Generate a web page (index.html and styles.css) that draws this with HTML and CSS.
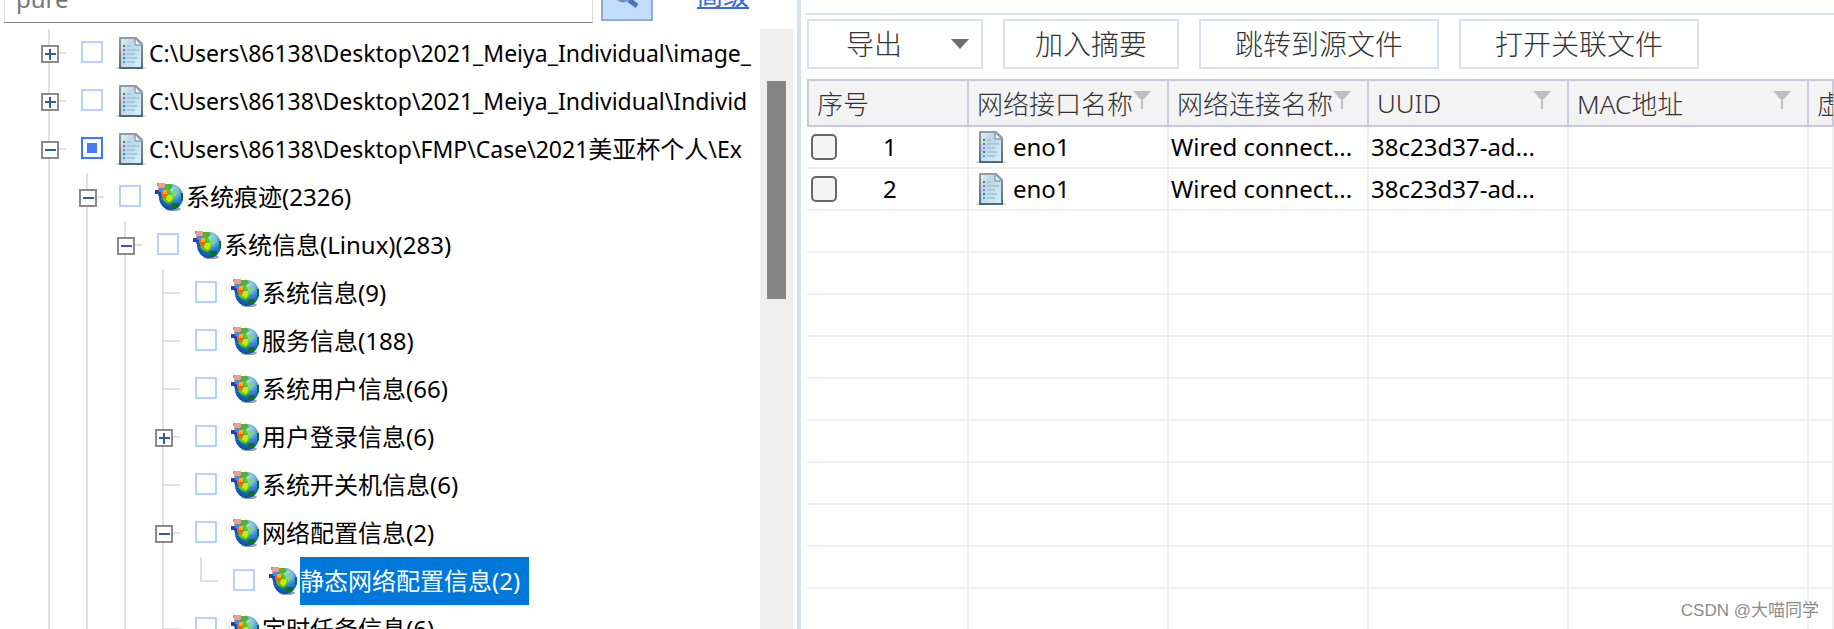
FILE: index.html
```html
<!DOCTYPE html>
<html lang="zh-CN">
<head>
<meta charset="utf-8">
<title>静态网络配置信息</title>
<link rel="stylesheet" href="styles.css">
</head>
<body>
<svg class="defs" aria-hidden="true">
  <defs>
    <linearGradient id="paper" x1="0" y1="0" x2="1" y2="1"><stop offset="0" stop-color="#e2f1f8"/><stop offset=".35" stop-color="#b9d6ea"/><stop offset="1" stop-color="#d8f0f8"/></linearGradient>
    <linearGradient id="edge" x1="0" y1="0" x2="0" y2="1"><stop offset="0" stop-color="#9a9a9a"/><stop offset="1" stop-color="#566c80"/></linearGradient>
    <radialGradient id="sea" cx=".6" cy=".25" r=".8"><stop offset="0" stop-color="#bdeaf5"/><stop offset=".5" stop-color="#2f86de"/><stop offset="1" stop-color="#0a3f9e"/></radialGradient>
  </defs>
  <symbol id="doc" viewBox="0 0 30 32">
    <path d="M0 30h30v2H0z" fill="#dcdcdc"/>
    <path d="M4 1h16l6 6v24H4z" fill="url(#paper)" stroke="url(#edge)" stroke-width="2"/>
    <path d="M19 1v7h7z" fill="#f2f8fb" stroke="#8aa2b5" stroke-width="1.5"/>
    <path d="M3 30h24v2H3z" fill="#50687d"/>
    <path d="M11 8h4v2h-4zM11 12h12v2H11zM11 16h8v2h-8zM11 20h10v2H11zM11 24h8v2h-8z" fill="#a5cbd4"/>
    <path d="M7 8h2v2H7z" fill="#25a825"/><path d="M7 12h2v2H7z" fill="#c0606a"/><path d="M7 16h2v2H7zM7 24h2v2H7z" fill="#5a92ff"/><path d="M7 20h2v2H7z" fill="#6c6c6c"/>
  </symbol>
  <symbol id="globe" viewBox="0 0 28 28">
    <ellipse cx="18" cy="26" rx="8" ry="2" fill="#9a9ea5"/>
    <ellipse cx="16" cy="14" rx="12" ry="13" fill="url(#sea)"/>
    <path d="M10 1h6l2 3-4 3-4-2z" fill="#4db82a"/>
    <path d="M18 6h4v4l-2 4-2 2-2-4z" fill="#7fd48a"/>
    <path d="M4 12l3-2 6-4 3 2 1 4 2 2-1 4-4 3-4-2-4-4z" fill="#55c42a"/>
    <path d="M12 12h5l1 3-3 4-4-2z" fill="#c2ee00"/>
    <path d="M26 10h2v7l-2 2zM18 20h6v3l-4 2h-3v-3z" fill="#08751c"/>
    <path d="M2 0h2v3H2z" fill="#9c9c9c"/><path d="M4 0h6v4L7 7H3V3z" fill="#f69a85"/>
    <path d="M6 9h7v3l-3 3-4-3z" fill="#ff5a12"/><path d="M8 7h4v4H8z" fill="#ffb400"/>
    <path d="M0 7h5l1 5 2 4-4-2-1-3H0z" fill="#1748ad"/>
    <path d="M4 5h4v4H4z" fill="#3a92d8"/>
  </symbol>
  <symbol id="funnel" viewBox="0 0 18 18"><path d="M0 0h18l-7 8H7z" fill="#bfbfbf"/><path d="M8 7h2v11H8z" fill="#bfbfbf"/></symbol>
</svg>

<main class="app">
  <section class="side">
    <form class="search">
      <input class="search-box" type="text" value="pure" aria-label="搜索">
      <button class="search-go" type="button" aria-label="查找"><svg viewBox="0 0 28 28"><circle cx="10" cy="11" r="7" fill="none" stroke="#6d92c4" stroke-width="3"/><path d="M16 17l8 6" stroke="#4a76b0" stroke-width="5"/></svg></button>
      <a class="advanced" href="#">高级</a>
    </form>
    <div class="tree-wrap">
      <ul class="tree" id="tree"></ul>
      <div class="scroll"><div class="thumb"></div></div>
    </div>
  </section>

  <section class="main">
    <div class="toolbar">
      <button class="tool drop" type="button">导出<svg class="caret" viewBox="0 0 18 10"><path d="M0 0h18l-9 10z" fill="#6d6d6d"/></svg></button>
      <button class="tool" type="button">加入摘要</button>
      <button class="tool wide" type="button">跳转到源文件</button>
      <button class="tool wide" type="button">打开关联文件</button>
    </div>
    <table class="grid">
      <colgroup><col class="c-no"><col class="c-mid"><col class="c-mid"><col class="c-mid"><col class="c-mac"><col></colgroup>
      <thead><tr>
        <th scope="col"><div class="head">序号</div></th>
        <th scope="col"><div class="head">网络接口名称<svg class="funnel"><use href="#funnel"/></svg></div></th>
        <th scope="col"><div class="head">网络连接名称<svg class="funnel"><use href="#funnel"/></svg></div></th>
        <th scope="col"><div class="head">UUID<svg class="funnel"><use href="#funnel"/></svg></div></th>
        <th scope="col"><div class="head">MAC地址<svg class="funnel"><use href="#funnel"/></svg></div></th>
        <th scope="col"><div class="head">虚</div></th>
      </tr></thead>
      <tbody id="rows"></tbody>
    </table>
  </section>
  <div class="mark">CSDN @大喵同学</div>
</main>
<script src="app.js"></script>
</body>
</html>
```
FILE: styles.css
```css
* { box-sizing: border-box; }
body {
  margin: 0;
  background: #fff;
  color: #000;
  font-family: "Noto Sans", "Noto Sans CJK SC", sans-serif;
  font-size: 24px;
}
.defs { position: absolute; width: 0; height: 0; }
.app { position: relative; display: flex; height: 100vh; overflow: hidden; }

.side {
  display: flex;
  flex-direction: column;
  flex: 0 0 801px;
  border-right: 4px solid #d8e1f1;
}
.search {
  display: flex;
  align-items: flex-end;
  height: 29px;
  padding: 0 0 6px 4px;
}
.search-box {
  width: 589px;
  height: 50px;
  padding: 0 11px;
  border: 1px solid #dcdcdc;
  border-bottom-color: #858585;
  background: #fff;
  color: #767676;
  font: inherit;
}
.search-go {
  display: flex;
  justify-content: center;
  align-items: flex-end;
  width: 52px;
  height: 48px;
  margin: 0 44px 2px 8px;
  padding: 0 0 8px;
  border: 2px solid #8fadd2;
  background: #c4dcfd;
}
.search-go svg { width: 28px; height: 28px; }
.advanced {
  margin-bottom: 12px;
  color: #3c6bd9;
  font-size: 26px;
  line-height: 32px;
}

.tree-wrap { display: flex; flex: 1; min-height: 0; padding-right: 4px; }
.tree { flex: 1; min-width: 0; margin: 0; padding: 0 0 0 32px; overflow: hidden; list-style: none; }
.node { display: flex; height: 48px; white-space: nowrap; }
.guide { flex: 0 0 38px; background: linear-gradient(#e0e0e0, #e0e0e0) 16px 0 / 2px 100% no-repeat; }
.joint {
  display: flex;
  align-items: center;
  flex: 0 0 38px;
  padding: 2px 0 0 9px;
  background:
    linear-gradient(#e0e0e0, #e0e0e0) 16px 0 / 2px 100% no-repeat,
    linear-gradient(#e0e0e0, #e0e0e0) 16px 23px / 18px 2px no-repeat;
}
.joint.last { background-size: 2px 25px, 18px 2px; }
.toggle { display: block; width: 18px; height: 18px; padding: 0; border: 2px solid #8a8a8a; background: #fff; }
.toggle svg { display: block; width: 14px; height: 14px; }
.tick {
  flex: none;
  appearance: none;
  width: 22px;
  height: 22px;
  margin: 12px 13px 0 11px;
  border: 2px solid #b9d0ff;
  background: #fff;
}
.tick.partial { border-color: #3a78ff; background: linear-gradient(#427bff, #427bff) center / 10px 10px no-repeat; }
.doc { flex: none; width: 30px; height: 32px; }
.node .doc { margin: 8px 3px 0 0; }
.globe { flex: none; width: 28px; height: 28px; margin: 10px 3px 0 1px; }
.name { line-height: 48px; cursor: pointer; }
.path { font-size: 23px; }
.han { font-size: 24px; }
.chosen { padding-right: 9px; background: #0078d9; color: #fff; }
.scroll { flex: 0 0 33px; padding: 52px 7px 0; background: #efefef; }
.thumb { height: 218px; background: #858585; }

.main { flex: 1; min-width: 0; padding: 13px 0 0 4px; overflow: hidden; }
.toolbar {
  display: flex;
  gap: 20px;
  padding: 4px 0 10px 2px;
  border-top: 2px solid #d8e1f1;
}
.tool {
  width: 176px;
  height: 50px;
  padding: 0;
  border: 2px solid #d8e1f1;
  background: #fff;
  color: #333;
  font-family: inherit;
  font-size: 28px;
  font-weight: 300;
  line-height: 40px;
}
.wide { width: 240px; }
.drop { display: flex; align-items: center; justify-content: space-between; padding: 0 12px 0 37px; }
.caret { width: 18px; height: 10px; }

.grid { width: calc(100% - 2px); margin-left: 2px; table-layout: fixed; border-spacing: 0; }
.c-no { width: 162px; }
.c-mid { width: 200px; }
.c-mac { width: 240px; }
.grid th {
  height: 48px;
  padding: 0;
  border: solid #c9c9da;
  border-width: 2px 2px 2px 0;
  background: #f3f3f3;
  color: #333;
  font-size: 26px;
  font-weight: 300;
  text-align: left;
}
.grid th:first-child { border-left-width: 2px; }
.head { display: flex; align-items: center; height: 44px; padding: 0 16px 0 8px; overflow: hidden; white-space: nowrap; }
.funnel { flex: none; width: 18px; height: 18px; margin: 0 0 6px auto; }
.grid td {
  height: 42px;
  padding: 0 0 0 2px;
  border: solid #efefef;
  border-width: 0 2px 2px 0;
  line-height: 32px;
  white-space: nowrap;
}
.cell { display: flex; align-items: center; height: 40px; }
.pick {
  appearance: none;
  width: 26px;
  height: 26px;
  margin: 0 46px 0 2px;
  border: 2px solid #666;
  border-radius: 5px;
  background: #f3f3f3;
}
.cell .doc { margin: 0 7px 0 5px; }
.mark {
  position: absolute;
  right: 15px;
  bottom: 6px;
  color: #8c8c8c;
  font-family: "Liberation Sans", "Noto Sans CJK SC", sans-serif;
  font-size: 17px;
  line-height: 24px;
}
```
FILE: app.js
```js
// g: one character per guide line before the joint; t: toggle sign
const nodes = [
  { g: "", t: "+", path: "C:\\Users\\86138\\Desktop\\2021_Meiya_Individual\\image_" },
  { g: "", t: "+", path: "C:\\Users\\86138\\Desktop\\2021_Meiya_Individual\\Individ" },
  { g: "", t: "-", path: "C:\\Users\\86138\\Desktop\\FMP\\Case\\2021<span class=\"han\">美亚杯个人</span>\\Ex", partial: true },
  { g: "|", t: "-", name: "系统痕迹(2326)" },
  { g: "||", t: "-", name: "系统信息(Linux)(283)" },
  { g: "|||", name: "系统信息(9)" },
  { g: "|||", name: "服务信息(188)" },
  { g: "|||", name: "系统用户信息(66)" },
  { g: "|||", t: "+", name: "用户登录信息(6)" },
  { g: "|||", name: "系统开关机信息(6)" },
  { g: "|||", t: "-", name: "网络配置信息(2)" },
  { g: "||||", name: "静态网络配置信息(2)", last: true, chosen: true },
  { g: "|||", name: "定时任务信息(6)", last: true },
];
const toggle = (t) => t ? `<button class="toggle" type="button" aria-label="${t === "+" ? "展开" : "折叠"}"><svg viewBox="0 0 14 14"><path d="M2 6h11v2H2z${t === "+" ? "M6 2h2v11H6z" : ""}" fill="#3a58a0"/></svg></button>` : "";
document.getElementById("tree").innerHTML = nodes.map((d, i) => `
  <li class="node">${[...d.g].map(() => '<span class="guide"></span>').join("")}<span class="joint${d.last ? " last" : ""}">${toggle(d.t)}</span>
  <input class="tick${d.partial ? " partial" : ""}" type="checkbox" id="n${i}">
  ${d.path ? '<svg class="doc"><use href="#doc"/></svg>' : '<svg class="globe"><use href="#globe"/></svg>'}
  <label class="name${d.path ? " path" : ""}${d.chosen ? " chosen" : ""}" for="n${i}">${d.path || d.name}</label></li>`).join("");

const data = [1, 2];
let rows = data.map((n) => `<tr>
  <td><label class="cell"><input class="pick" type="checkbox">${n}</label></td>
  <td><div class="cell"><svg class="doc"><use href="#doc"/></svg>eno1</div></td>
  <td>Wired connect...</td><td>38c23d37-ad...</td><td></td><td></td></tr>`).join("");
rows += "<tr><td></td><td></td><td></td><td></td><td></td><td></td></tr>".repeat(10);
document.getElementById("rows").innerHTML = rows;
```
